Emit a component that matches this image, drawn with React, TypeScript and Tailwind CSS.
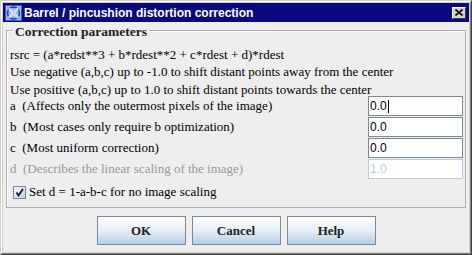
const serif = "font-['Liberation_Serif','Times_New_Roman',serif]";

const fields = [
  { label: "a  (Affects only the outermost pixels of the image)", value: "0.0", caret: true },
  { label: "b  (Most cases only require b optimization)", value: "0.0" },
  { label: "c  (Most uniform correction)", value: "0.0" },
  { label: "d  (Describes the linear scaling of the image)", value: "1.0", disabled: true },
];

function TitleIcon() {
  return (
    <svg width="17" height="16" viewBox="0 0 17 16" className="shrink-0">
      <rect x="0.5" y="0.5" width="16" height="15" fill="#9db4e8" stroke="#3b5bc9" />
      <circle cx="8.5" cy="8" r="6" fill="none" stroke="#1a38b8" strokeWidth="1.4" />
      <path d="M4 3.5 L13 12.5 M13 3.5 L4 12.5" stroke="#ffffff" strokeWidth="2.4" />
      <path d="M4 3.5 L13 12.5 M13 3.5 L4 12.5" stroke="#5a7ad8" strokeWidth="0.6" />
    </svg>
  );
}

function Field({ value, disabled, caret }: { value: string; disabled?: boolean; caret?: boolean }) {
  return (
    <div
      className={`flex h-[20px] w-[95px] items-center bg-white pl-[1px] font-['Liberation_Sans',Arial,sans-serif] text-[12px] ${
        disabled ? "border border-[#b8cfe5] text-[#b8cfe5]" : "border border-[#7a8a99] text-black"
      }`}
    >
      {value}
      {caret && <span className="ml-[1px] h-[13px] w-[1px] bg-black" />}
    </div>
  );
}

function Button({ label }: { label: string }) {
  return (
    <button
      className={`h-[29px] w-[89px] border border-[#7a8a99] bg-gradient-to-b from-white via-[#e6eef7] to-[#b8cfe5] ${serif} text-[13px] font-bold text-[#222]`}
    >
      {label}
    </button>
  );
}

export default function App() {
  return (
    <div className="h-[255px] w-[472px] border border-t-[#d4d0c8] border-l-[#d4d0c8] border-b-[#404040] border-r-[#404040]">
      <div className="flex h-full flex-col border border-t-white border-l-white border-b-[#808080] border-r-[#808080] bg-[#d4d0c8] p-[1px]">
        {/* title bar */}
        <div className="flex h-[19px] shrink-0 items-center bg-[#0a0a80] pl-[2px] pr-[3px]">
          <TitleIcon />
          <span className="ml-[2px] font-['Liberation_Sans',Arial,sans-serif] text-[12px] font-bold text-white">
            Barrel / pincushion distortion correction
          </span>
          <div className="ml-auto flex h-[12px] w-[14px] items-center justify-center border border-t-white border-l-white border-b-[#404040] border-r-[#404040] bg-[#d4d0c8]">
            <svg width="8" height="7" viewBox="0 0 8 7">
              <path d="M0.5 0.5 L7.5 6.5 M7.5 0.5 L0.5 6.5" stroke="#000" strokeWidth="1.6" />
            </svg>
          </div>
        </div>

        {/* content */}
        <div className="flex flex-1 flex-col bg-[#eeeeee] pl-[3px] pr-[3px] pt-[8px]">
          <div className="relative h-[178px] border border-[#b0b0b0] pl-[3px] pr-[2px] pt-[14px] shadow-[inset_1px_1px_0_#ffffff]">
            <span className={`absolute -top-[7px] left-[6px] bg-[#eeeeee] px-[2px] ${serif} text-[13.5px] font-bold leading-[16px] text-[#222]`}>
              Correction parameters
            </span>
            <div className={`${serif} text-[13px] text-black`}>
              <div className="h-[18px] leading-[20px]">rsrc = (a*redst**3 + b*rdest**2 + c*rdest + d)*rdest</div>
              <div className="h-[18px] leading-[18px]">Use negative (a,b,c) up to -1.0 to shift distant points away from the center</div>
              <div className="h-[15px] leading-[18px]">Use positive (a,b,c) up to 1.0 to shift distant points towards the center</div>
              <div className="flex flex-col gap-[1px]">
                {fields.map((f) => (
                  <div key={f.label} className="flex h-[20px] items-center justify-between">
                    <span className={`whitespace-pre ${f.disabled ? "text-[#999999]" : ""}`}>{f.label}</span>
                    <Field value={f.value} disabled={f.disabled} caret={f.caret} />
                  </div>
                ))}
              </div>
              <div className="mt-[2px] flex h-[22px] items-center pl-[3px]">
                <span className="flex h-[13px] w-[13px] items-center justify-center border border-[#7a8a99] bg-gradient-to-br from-white to-[#b8cfe5]">
                  <svg width="9" height="9" viewBox="0 0 9 9">
                    <path d="M1.5 4.5 L3.5 7.5 L8 1" fill="none" stroke="#1a1a2a" strokeWidth="1.8" />
                  </svg>
                </span>
                <span className="ml-[3px]">Set d = 1-a-b-c for no image scaling</span>
              </div>
            </div>
          </div>

          <div className="mt-[8px] flex justify-center gap-[6px]">
            <Button label="OK" />
            <Button label="Cancel" />
            <Button label="Help" />
          </div>
        </div>
      </div>
    </div>
  );
}
